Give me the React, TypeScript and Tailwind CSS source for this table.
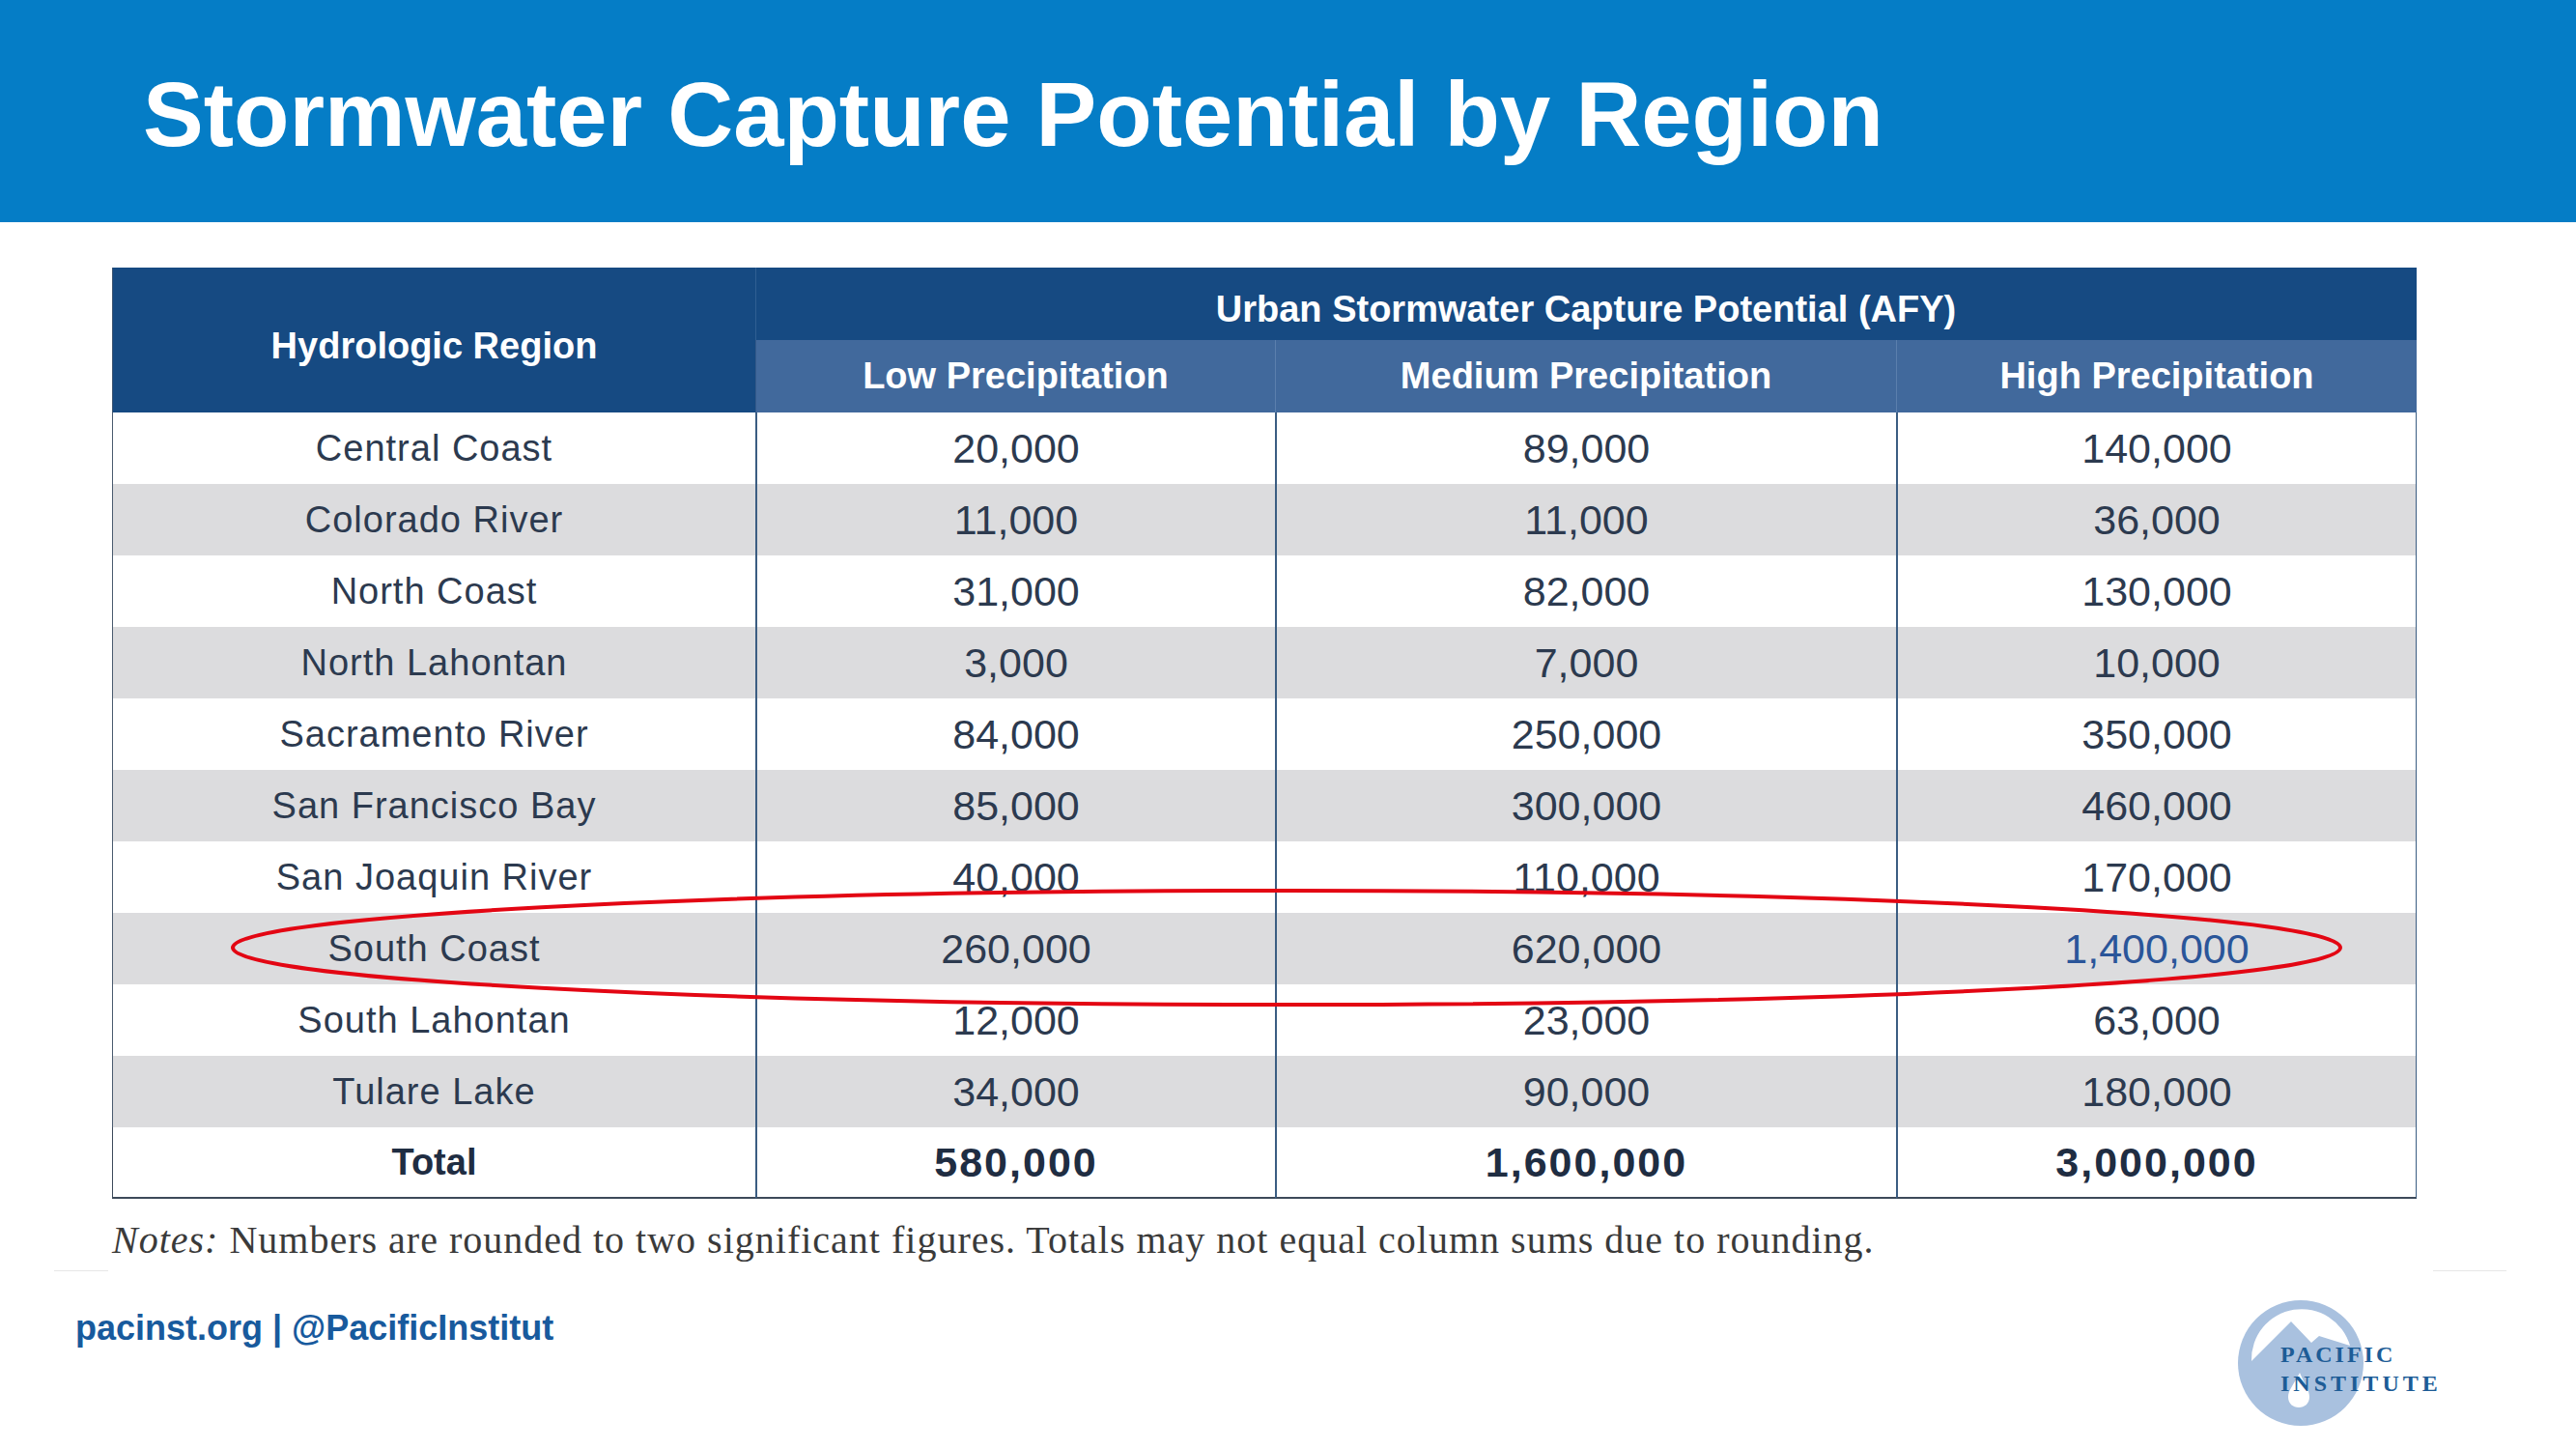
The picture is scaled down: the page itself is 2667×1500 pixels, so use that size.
import React from 'react';

const rows = [
  ['Central Coast', '20,000', '89,000', '140,000'],
  ['Colorado River', '11,000', '11,000', '36,000'],
  ['North Coast', '31,000', '82,000', '130,000'],
  ['North Lahontan', '3,000', '7,000', '10,000'],
  ['Sacramento River', '84,000', '250,000', '350,000'],
  ['San Francisco Bay', '85,000', '300,000', '460,000'],
  ['San Joaquin River', '40,000', '110,000', '170,000'],
  ['South Coast', '260,000', '620,000', '1,400,000'],
  ['South Lahontan', '12,000', '23,000', '63,000'],
  ['Tulare Lake', '34,000', '90,000', '180,000'],
];

const Logo = () => (
  <div className="relative w-[220px] h-[132px]">
    <svg width="132" height="132" viewBox="0 0 132 132">
      <circle cx="66" cy="66" r="65" fill="#a9c1df" />
      <path d="M15 64 A52 52 0 0 1 117 48 L85 38 L77 45 L56 23 Z" fill="#ffffff" />
      <path d="M65 76 C70 88 75 94 75 101 C75 108 70 112 64 112 C58 112 53 108 53 101 C53 94 59 88 65 76 Z" fill="#ffffff" />
    </svg>
    <div className="absolute left-[45px] top-[42px] font-['Liberation_Serif',serif] font-bold text-[24px] leading-[30px] text-[#1d5c96]">
      <div className="tracking-[3px]">PACIFIC</div>
      <div className="tracking-[4px]">INSTITUTE</div>
    </div>
  </div>
);

const App = () => {
  return (
    <main className="w-[2667px] h-[1500px] bg-white overflow-hidden font-['Liberation_Sans',Arial,sans-serif]">
      <header className="h-[230px] bg-[#057dc6] pl-[148px] pt-[72px]">
        <h1 className="text-[94px] font-bold leading-none text-white">Stormwater Capture Potential by Region</h1>
      </header>

      <section className="relative ml-[116px] mt-[47px] w-[2386px]">
        <div className="grid grid-cols-[666px_538px_643px_539px]">
          <div className="row-span-2 flex items-center justify-center pt-[12px] bg-[#164a82] border-l border-[#3c5470] text-white font-bold text-[38px]">
            Hydrologic Region
          </div>
          <div className="col-span-3 h-[75px] flex items-center justify-center pt-[11px] bg-[#164a82] border-l border-[#2f5e92] border-r border-r-[#164a82] text-white font-bold text-[38px]">
            Urban Stormwater Capture Potential (AFY)
          </div>
          <div className="h-[75px] flex items-center justify-center bg-[#41699c] border-l border-[#35598a] text-white font-bold text-[38px]">
            Low Precipitation
          </div>
          <div className="h-[75px] flex items-center justify-center bg-[#41699c] border-l border-[#5b7fad] text-white font-bold text-[38px]">
            Medium Precipitation
          </div>
          <div className="h-[75px] flex items-center justify-center bg-[#41699c] border-l border-[#5b7fad] text-white font-bold text-[38px]">
            High Precipitation
          </div>

          {rows.map((r, i) => {
            const bg = i % 2 === 1 ? 'bg-[#dcdcde]' : 'bg-white';
            return (
              <React.Fragment key={r[0]}>
                <div className={`h-[74px] flex items-center justify-center border-l border-[#4a5a6e] ${bg} text-[38px] tracking-[1px] text-[#2c3a4f]`}>
                  {r[0]}
                </div>
                <div className={`h-[74px] flex items-center justify-center border-l-2 border-[#3b5d82] ${bg} text-[43px] text-[#2c3a4f]`}>
                  {r[1]}
                </div>
                <div className={`h-[74px] flex items-center justify-center border-l-2 border-[#3b5d82] ${bg} text-[43px] text-[#2c3a4f]`}>
                  {r[2]}
                </div>
                <div
                  className={`h-[74px] flex items-center justify-center border-l-2 border-r border-[#3b5d82] ${bg} text-[43px] ${
                    r[3] === '1,400,000' ? 'text-[#2a5599]' : 'text-[#2c3a4f]'
                  }`}
                >
                  {r[3]}
                </div>
              </React.Fragment>
            );
          })}

          <div className="h-[74px] flex items-center justify-center border-l border-b-2 border-[#3d4a5a] bg-white font-bold text-[38px] text-[#1f2d42]">
            Total
          </div>
          <div className="h-[74px] flex items-center justify-center border-l-2 border-b-2 border-[#3b5d82] border-b-[#3d4a5a] bg-white font-bold text-[43px] tracking-[2px] text-[#1f2d42]">
            580,000
          </div>
          <div className="h-[74px] flex items-center justify-center border-l-2 border-b-2 border-[#3b5d82] border-b-[#3d4a5a] bg-white font-bold text-[43px] tracking-[2px] text-[#1f2d42]">
            1,600,000
          </div>
          <div className="h-[74px] flex items-center justify-center border-l-2 border-r border-b-2 border-[#3b5d82] border-b-[#3d4a5a] bg-white font-bold text-[43px] tracking-[2px] text-[#1f2d42]">
            3,000,000
          </div>
        </div>

        {/* red highlight round the South Coast row */}
        <svg className="absolute left-0 top-0 pointer-events-none overflow-visible" width="2386" height="964">
          <ellipse cx="1216" cy="704" rx="1091" ry="59" fill="none" stroke="#e30613" strokeWidth="4" />
        </svg>
      </section>

      <p className="ml-[116px] mt-[23px] font-['Liberation_Serif',serif] text-[40px] tracking-[1px] leading-none text-[#3a3a3a]">
        <span className="italic">Notes:</span> Numbers are rounded to two significant figures. Totals may not equal column sums due to rounding.
      </p>

      <div className="flex mt-[11px]">
        <div className="ml-[56px] w-[56px] h-px bg-[#e6e6e6]" />
        <div className="ml-auto mr-[72px] w-[76px] h-px bg-[#e6e6e6]" />
      </div>

      <footer className="flex items-start pl-[78px] pr-[131px]">
        <div className="mt-[41px] text-[36px] font-bold leading-none text-[#185a9d]">
          pacinst.org | @PacificInstitut
        </div>
        <div className="ml-auto mt-[29px]">
          <Logo />
        </div>
      </footer>
    </main>
  );
};

export default App;
